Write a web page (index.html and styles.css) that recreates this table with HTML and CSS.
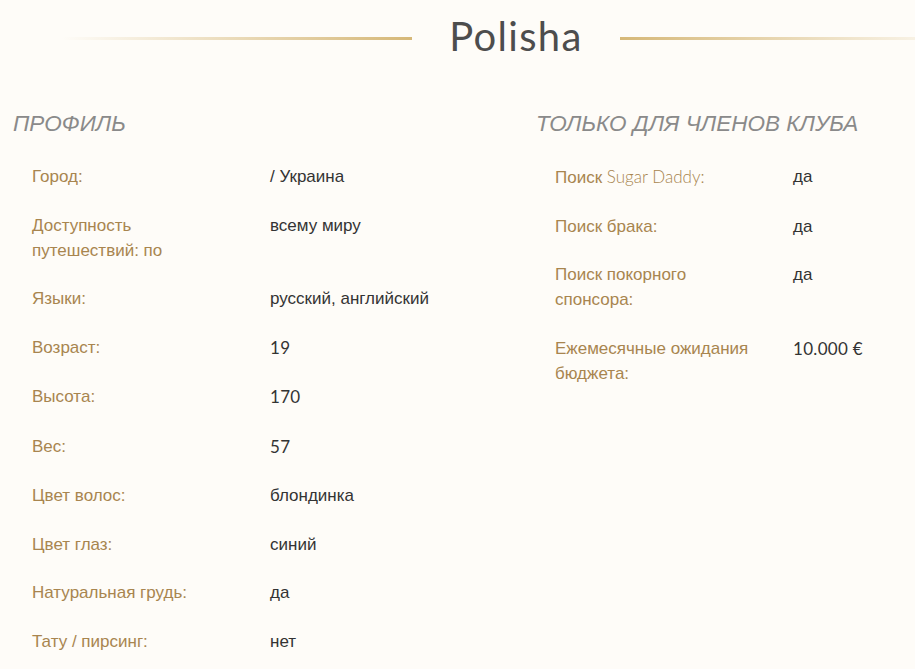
FILE: index.html
```html
<!DOCTYPE html>
<html lang="ru">
<head>
<meta charset="utf-8">
<title>Polisha</title>
<link rel="stylesheet" href="styles.css">
</head>
<body>
<div class="page">
  <header class="title-bar">
    <span class="line line-left"></span>
    <h1 class="title">Polisha</h1>
    <span class="line line-right"></span>
  </header>
  <div class="columns">
    <section class="col">
      <h2 class="col-head">ПРОФИЛЬ</h2>
      <dl class="facts">
        <div class="row"><dt>Город:</dt><dd>/ Украина</dd></div>
        <div class="row"><dt>Доступность путешествий: по</dt><dd>всему миру</dd></div>
        <div class="row"><dt>Языки:</dt><dd>русский, английский</dd></div>
        <div class="row"><dt>Возраст:</dt><dd><span class="num">19</span></dd></div>
        <div class="row"><dt>Высота:</dt><dd><span class="num">170</span></dd></div>
        <div class="row"><dt>Вес:</dt><dd><span class="num">57</span></dd></div>
        <div class="row"><dt>Цвет волос:</dt><dd>блондинка</dd></div>
        <div class="row"><dt>Цвет глаз:</dt><dd>синий</dd></div>
        <div class="row"><dt>Натуральная грудь:</dt><dd>да</dd></div>
        <div class="row"><dt>Тату / пирсинг:</dt><dd>нет</dd></div>
      </dl>
    </section>
    <section class="col">
      <h2 class="col-head">ТОЛЬКО ДЛЯ ЧЛЕНОВ КЛУБА</h2>
      <dl class="facts">
        <div class="row"><dt>Поиск <span class="latin">Sugar Daddy:</span></dt><dd>да</dd></div>
        <div class="row"><dt>Поиск брака:</dt><dd>да</dd></div>
        <div class="row"><dt>Поиск покорного спонсора:</dt><dd>да</dd></div>
        <div class="row"><dt>Ежемесячные ожидания бюджета:</dt><dd><span class="num">10.000 €</span></dd></div>
      </dl>
    </section>
  </div>
</div>
</body>
</html>
```
FILE: styles.css
```css
html, body {
  margin: 0;
  padding: 0;
  background: #fefcf8;
  overflow-x: hidden;
}
body {
  font-family: "Liberation Sans", Arial, sans-serif;
  color: #333;
}
.page {
  width: 1032px;
}
.title-bar {
  display: flex;
  align-items: center;
  gap: 37px;
  height: 76px;
}
.line {
  flex: 1;
  height: 3px;
}
.line-left {
  background: linear-gradient(to right, rgba(214,184,120,0) 0%, rgba(214,184,120,0) 15%, #d6b878 100%);
}
.line-right {
  background: linear-gradient(to left, rgba(214,184,120,0) 0%, rgba(214,184,120,0) 15%, #d6b878 100%);
}
.title {
  margin: 0 0 4px;
  font-family: Lato, "Open Sans", sans-serif;
  font-weight: 400;
  font-size: 40px;
  line-height: 1;
  letter-spacing: 1.3px;
  color: #4d4d4d;
}
.columns {
  display: grid;
  grid-template-columns: 483px 483px;
  column-gap: 40px;
  padding: 0 13px;
  margin-top: 33px;
}
.col-head {
  margin: 0 0 13px;
  font-size: 22.5px;
  line-height: 30px;
  font-style: italic;
  font-weight: 400;
  color: #8a8a8a;
}
.facts {
  margin: 0;
  padding: 0 0 0 19px;
}
.row {
  display: grid;
  grid-template-columns: 238px 1fr;
  padding: 12px 0 11.5px;
  font-size: 17px;
  line-height: 25px;
}
.row dt {
  color: #a8854f;
  padding-right: 32px;
}
.row dd {
  margin: 0;
  color: #333;
}
.latin {
  font-family: Lato, sans-serif;
  font-weight: 300;
}
.num {
  font-family: Lato, sans-serif;
  font-weight: 400;
  letter-spacing: 0.3px;
}
```
